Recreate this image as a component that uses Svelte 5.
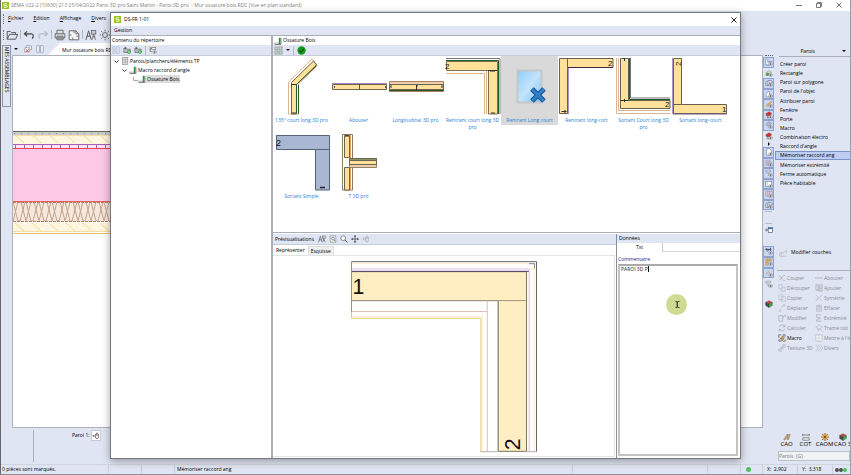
<script lang="ts">
	type Tool = { icon: string; on?: boolean; label: string };

	const menus = ['Fichier', 'Edition', 'Affichage', 'Divers'];

	const wallCommands = [
		'Créer paroi',
		'Rectangle',
		'Paroi sur polygone',
		"Paroi de l'objet",
		'Attribuer paroi',
		'Fenêtre',
		'Porte',
		'Macro',
		'Combinaison électro',
		"Raccord d'angle",
		'Mémoriser raccord ang',
		'Mémoriser extrémité',
		'Ferme automatique',
		'Pièce habitable'
	];

	const viewTools: Tool[] = [
		{ icon: 'wall', on: true, label: 'Paroi' },
		{ icon: 'floor', label: 'Plancher' },
		{ icon: 'poly', on: true, label: 'Polygone' },
		{ icon: 'corner', on: true, label: 'Angle' },
		{ icon: 'beam', on: true, label: 'Poutre' },
		{ icon: 'red', on: true, label: 'Toit' },
		{ icon: 'grey', on: true, label: 'Lucarne' },
		{ icon: 'red', label: 'Couverture' }
	];

	const layerTools: Tool[] = [
		{ icon: 'sheet', on: true, label: 'Feuille' },
		{ icon: 'layers', on: true, label: 'Couches' },
		{ icon: 'eyeSheet', on: true, label: 'Visible' },
		{ icon: 'eyeBox', on: true, label: 'Cadre' },
		{ icon: 'columns', on: true, label: 'Montants' },
		{ icon: 'poly', on: true, label: 'Volume' }
	];

	const displayTools: Tool[] = [
		{ icon: 'dims', on: true, label: 'Cotes' },
		{ icon: 'blocks', on: true, label: 'Blocs' },
		{ icon: 'beamEye', on: true, label: 'Pièces' },
		{ icon: 'eyeSheet', label: 'Textes' }
	];

	const edits = [
		{ icon: 'cut', label: 'Couper' },
		{ icon: 'dash', label: 'Abouter' },
		{ icon: 'split', label: 'Découper' },
		{ icon: 'add', label: 'Ajouter' },
		{ icon: 'copy', label: 'Copier' },
		{ icon: 'mirror', label: 'Symétrie' },
		{ icon: 'move', label: 'Déplacer' },
		{ icon: 'trash', label: 'Effacer' },
		{ icon: 'modify', label: 'Modifier' },
		{ icon: 'end', label: 'Extrémité' },
		{ icon: 'refresh', label: 'Calculer' },
		{ icon: 'roof', label: 'Trame toit' },
		{ icon: 'macro', label: 'Macro' },
		{ icon: 'scale', label: "Mettre à l'é" },
		{ icon: 'texture', label: 'Texture 3D' },
		{ icon: 'more', label: 'Divers' }
	];

	const modules = [
		{ icon: 'cao', label: 'CAO' },
		{ icon: 'cot', label: 'COT' },
		{ icon: 'caom', label: 'CAOM' },
		{ icon: 'cube', label: 'CAO 3' }
	];

	const items = [
		'135° court long 3D pro',
		'Abouter',
		'Longitudinal 3D pro',
		'Rentrant court long 3D pro',
		'Rentrant Long court',
		'Rentrant long-cort',
		'Sortant Court long 3D pro',
		'Sortant long-court',
		'Sortant Simple',
		'T  3D pro'
	];

	let selected = $state(4);
	let command = $state('Mémoriser raccord ang');
	let comment = $state('PAROI 3D P');

	const eye = '<ellipse cx="7" cy="7.5" rx="2.4" ry="1.5" fill="#fff" stroke="#555" stroke-width=".6"/><circle cx="7" cy="7.5" r=".8" fill="#333"/>';
	const folder = '<path d="M1 3h3l1 1h4v4H1z" fill="#b9bcc2" stroke="#555" stroke-width=".7"/><path d="M3 1v3M1.500 2.500h3" stroke="#444" stroke-width=".7"/>';

	// small glyphs on a 10 x 10 grid
	const icons: Record<string, string> = {
		open: '<path d="M1 8.500V2h2.500l1 1H8v1.500M1 8.500L3 4.500h6.700L8 8.500z" fill="none" stroke="#555" stroke-width=".8"/>',
		undo: '<path d="M3.500 2L1.200 4l2.300 2M1.500 4H7c2 0 2 3 .5 4" fill="none" stroke="#444" stroke-width="1"/>',
		redo: '<path d="M6.500 2l2.300 2-2.300 2M8.500 4H3c-2 0-2 3-.5 4" fill="none" stroke="#b5bdcb" stroke-width="1"/>',
		print: '<path d="M2.500 4V1h5v3M1 4h8v3.500H1zM2.500 6h5v3h-5z" fill="#dfe1e5" stroke="#666" stroke-width=".8"/><path d="M3.500 7.500h3" stroke="#666" stroke-width=".6"/>',
		page: '<path d="M1 1.500h5.500L9 4v5H1z" fill="#f5f5f5" stroke="#666" stroke-width=".8"/><path d="M1 5h2M5 1.500v2M9 6H7M4 9V7M6.500 1.500V4H9" stroke="#666" stroke-width=".7" fill="none"/>',
		alpha: '<path d="M.8 9L3 1.500 5.200 9M1.500 6h3" fill="none" stroke="#555" stroke-width=".8"/><rect x="5.500" y="1.200" width="3.500" height="3" fill="#ccc" stroke="#555" stroke-width=".6"/><path d="M7.200 4.200L6 9M7.200 4.200L8.800 9M6.500 6.500h2" stroke="#555" stroke-width=".6"/>',
		sun: '<circle cx="5" cy="5" r="2" fill="none" stroke="#666" stroke-width=".8"/><path d="M5 .5v1.500M5 8v1.500M.5 5H2M8 5h1.500M1.800 1.800l1 1M7.200 7.200l1 1M8.200 1.800l-1 1M2.800 7.200l-1 1" stroke="#666" stroke-width=".7"/>',
		closeDoc: '<rect x="3" y="1" width="6.500" height="5" fill="#e8effa" stroke="#8795ad" stroke-width=".8"/><rect x="1" y="3.500" width="6" height="5" fill="#fff" stroke="#8795ad" stroke-width=".8"/><path d="M2 5l4 4M6 5L2 9" stroke="#d0392b" stroke-width="1.100"/>',
		tile: '<rect x="1" y="1" width="3.300" height="8" fill="#eef3fb" stroke="#8795ad" stroke-width=".8"/><rect x="5.700" y="1" width="3.300" height="8" fill="#eef3fb" stroke="#8795ad" stroke-width=".8"/>',
		list: '<g fill="none" stroke="#b3bac7" stroke-width=".8"><rect x="1" y="1" width="3" height="3"/><rect x="1" y="6" width="3" height="3"/><rect x="6" y="1" width="3" height="8"/></g>',
		folderAdd: folder + '<circle cx="7.500" cy="7.500" r="2.200" fill="#159a28"/><path d="M7.500 6.200v2.600M6.200 7.500h2.600" stroke="#fff" stroke-width=".7"/>',
		treeEye: '<path d="M1.500 1v6h2M1.500 3.500h2" fill="none" stroke="#555" stroke-width=".8"/><rect x="3.500" y="2" width="5" height="2.500" fill="#fff" stroke="#555" stroke-width=".7"/>' + eye,
		cabinet: '<rect x="2" y=".8" width="6.500" height="8.400" fill="#e9e9e9" stroke="#888" stroke-width=".8"/><path d="M2 3.500h6.500M2 6.300h6.500M4.500 2.200h1.500M4.500 5h1.500M4.500 7.800h1.500" stroke="#888" stroke-width=".8"/>',
		angle: '<path d="M.5 7.500h5.500V9H.5z" fill="#f3f3f3" stroke="#999" stroke-width=".7"/><path d="M6 1h2v8H6z" fill="#2e8f3b"/><path d="M8.700 1v8.500H1" fill="none" stroke="#444" stroke-width=".8"/>',
		grid: '<g fill="#bcd6c3" stroke="#888" stroke-width=".6"><rect x="1" y="1" width="3.400" height="3.400"/><rect x="5.600" y="1" width="3.400" height="3.400"/><rect x="1" y="5.600" width="3.400" height="3.400"/><rect x="5.600" y="5.600" width="3.400" height="3.400"/></g>',
		ok: '<circle cx="5" cy="5" r="4.600" fill="#119a1c"/><path d="M2.700 5l1.700 1.900 3-3.600" fill="none" stroke="#064e0b" stroke-width="1.200"/>',
		preview: '<path d="M1.500 1h7v8h-7z" fill="#f4f4f4" stroke="#888" stroke-width=".8"/><circle cx="5" cy="4.500" r="1.800" fill="none" stroke="#555" stroke-width=".7"/><path d="M6.200 6l1.500 1.800" stroke="#555" stroke-width=".8"/>',
		zoom: '<circle cx="4" cy="4" r="3" fill="#f7f9fc" stroke="#555" stroke-width=".8"/><path d="M6.200 6.200L9.300 9.300" stroke="#555" stroke-width="1.200"/>',
		pan: '<path d="M5 1v8M1 5h8" stroke="#444" stroke-width=".9"/><path d="M5 0l1.600 2H3.400zM5 10l1.600-2H3.400zM0 5l2-1.600v3.200zM10 5L8 3.400v3.200z" fill="#333"/>',
		mouse: '<path d="M4.500 2.500h3.500v5q-1.700 2-3.500 0zM6.200 2.500v2.500M1 5h3M2.500 3.500L1 5l1.500 1.500M6.200 .5v2" fill="none" stroke="#444" stroke-width=".8"/>',
		wall: '<path d="M1 1v8h4M3.500 1v3.500H9M6 1v3.500" fill="none" stroke="#778" stroke-width=".8"/><path d="M2 2v5h3M4.500 2.500h4" stroke="#fff" stroke-width="1" fill="none"/>' + eye,
		floor: '<path d="M1 4.500L5 2l3.500 2L5 6.500z" fill="#cbd3c7" stroke="#888" stroke-width=".5"/><circle cx="3" cy="6.800" r="2" fill="#3aaa45"/>' + eye,
		poly: '<path d="M1 8V3.500L5 1.500l4 1v2.500H5V8z" fill="#e6e9ee" stroke="#667" stroke-width=".7"/><path d="M5 1.500V5M3 3v5" stroke="#667" stroke-width=".6"/>' + eye,
		corner: '<path d="M1.500 8.500h7v-2.300H5.500V2H3.500L1.500 6z" fill="#fff" stroke="#778" stroke-width=".7"/>' + eye,
		beam: '<path d="M1 7L8 1.500l1 1L2.500 8z" fill="#f0b35b" stroke="#b98437" stroke-width=".5"/>' + eye,
		beamEye: '<path d="M1.500 7.500L4 2.500l1.500 3" fill="none" stroke="#e2a65b" stroke-width="1.200"/>' + eye,
		red: '<path d="M1 3.500L5 1l3.500 2L6 5.800 2 6z" fill="#cf2f2f" stroke="#7d2b2b" stroke-width=".4"/><path d="M3 6v2.500h2" stroke="#555" fill="none" stroke-width=".7"/>' + eye,
		grey: '<path d="M1 3.500L5 1l3.500 2L6 5.800 2 6z" fill="#b7bac2" stroke="#787b85" stroke-width=".5"/>' + eye,
		sheet: '<path d="M2 1h4l2 2v6H2z" fill="#fff" stroke="#667" stroke-width=".7"/>' + eye,
		layers: '<path d="M1 1.500h5v1.500H1zM1 4h7v1.500H1zM1 6.500h4V8H1z" fill="#ddd" stroke="#a08595" stroke-width=".6"/>' + eye,
		eyeSheet: '<path d="M1 1.500h6v2H1zM1 5h3v3.500" fill="#eee" stroke="#889" stroke-width=".7"/>' + eye,
		eyeBox: '<rect x="1" y="1.500" width="7.500" height="7" fill="#fff" stroke="#667" stroke-width=".7"/><path d="M3 1.500v7" stroke="#889" stroke-width=".5"/>' + eye,
		columns: '<path d="M1 1.500h8v6H1zM3.500 1.500v6M6 1.500v6" fill="#e2d4da" stroke="#99808c" stroke-width=".7"/>' + eye,
		dims: '<path d="M1 3h6M2.500 1.500L1 3l1.500 1.500M7 1v4M3 5.500L5 3" fill="none" stroke="#223" stroke-width=".9"/>' + eye,
		blocks: '<path d="M1 1h3v3H1zM5 1h3v3H5zM1 5h3v4H1z" fill="#f1b560" stroke="#a77c3b" stroke-width=".6"/>' + eye,
		panel: '<path d="M0 5h3M1.500 3.500L3 5 1.500 6.500" fill="none" stroke="#333" stroke-width=".8"/><rect x="4" y="2" width="5.500" height="6" fill="#fff" stroke="#357" stroke-width=".8"/><path d="M4 3h5.500" stroke="#258" stroke-width="1.200"/>',
		cube: '<path d="M5 .8L9.200 3 5 5 .8 3z" fill="#d9433b" stroke="#333" stroke-width=".4"/><path d="M.8 3L5 5v4.500L.8 7z" fill="#444a55" stroke="#333" stroke-width=".4"/><path d="M5 5l4.200-2v4L5 9.500z" fill="#3fae49" stroke="#333" stroke-width=".4"/>',
		cut: '<path d="M1 2l4 3-4 3M9 2H7L3 6M9 8H7L4 5" fill="none" stroke="#a9b0bc" stroke-width=".9"/>',
		dash: '<path d="M0 5h10" stroke="#a3abb8" stroke-width="1"/>',
		split: '<path d="M1 1h4v5H1zM5 4h4v5H4V6" fill="none" stroke="#b2b9c4" stroke-width=".8"/>',
		add: '<path d="M1 1h3v7H1zM5 1h4v4H5zM5 6h4v3H5z" fill="#d6dbe4" stroke="#a4acba" stroke-width=".8"/>',
		copy: '<path d="M1 1h5v6H1zM4 3h5v6H4z" fill="#e6ebf4" stroke="#b2b9c4" stroke-width=".8"/>',
		mirror: '<path d="M1 1l3 3-3 4M9 1L1 9M6 6l3 3" fill="none" stroke="#b2b9c4" stroke-width=".8"/>',
		move: '<path d="M1 9h2V6M4 5l4-4h-2M8 1v2" fill="none" stroke="#b2b9c4" stroke-width=".9"/>',
		trash: '<path d="M2 3h6v6H2zM1.500 2h7M4 1h2M4 4v4M6 4v4" fill="#dde2ea" stroke="#abb2be" stroke-width=".8"/>',
		modify: '<path d="M1 2h5v7H1zM4 6l5-5v3" fill="none" stroke="#a9b0bc" stroke-width=".9"/>',
		end: '<path d="M2 1h6M2 1v3l5 1-5 2v2h6" fill="none" stroke="#a9b0bc" stroke-width=".9"/>',
		refresh: '<path d="M8.500 3.500A3.700 3.700 0 0 0 1.500 4M1.500 6.500a3.700 3.700 0 0 0 7-.5M8.500 1v2.500H6M1.500 9V6.500H4" fill="none" stroke="#a9b0bc" stroke-width=".9"/>',
		roof: '<path d="M5 1l4 3-4 3-4-3zM5 5l4 4M3 6l2 3" fill="none" stroke="#b2b9c4" stroke-width=".8"/>',
		macro: '<path d="M1 5V1h3M1 7v2h3M6 9h3V7M6 1h3v2" fill="none" stroke="#444" stroke-width=".8"/><path d="M2 7l3-4 2-1 1 2-2 4H4L5 5z" fill="#e5a04c" stroke="#555" stroke-width=".6"/>',
		scale: '<path d="M1 1h8v8H1zM3 5h4M5 1v2M5 7v2" fill="#edf1f7" stroke="#b2b9c4" stroke-width=".8"/>',
		texture: '<path d="M1 6h3v3H1zM6 1h3v3H6zM4 6l2-2M3 3L7 7" fill="none" stroke="#a9b0bc" stroke-width=".9"/>',
		more: '<path d="M1 1l3 4-3 4M4 1l3 4-3 4M7 1l2.500 4L7 9" fill="none" stroke="#b2b9c4" stroke-width=".8"/>',
		cao: '<path d="M1 8l4-6h4L7 8H5l1-3H5L2.500 9z" fill="#e2b078" stroke="#665" stroke-width=".6"/><path d="M6 2v3" stroke="#555" stroke-width=".6"/>',
		cot: '<path d="M1 1v3M9 1v3M1 2.500h8M1 6h8v3H1z" fill="#f4f4f4" stroke="#555" stroke-width=".8"/>',
		caom: '<path d="M5 0v10M0 5h10M1.500 1.500l7 7M8.500 1.500l-7 7" stroke="#a86b2b" stroke-width="1.500"/><circle cx="5" cy="5" r="3" fill="#e59a3e"/><circle cx="5" cy="5" r="1.100" fill="#333"/>',
		layerEdit: '<path d="M1 9h8M1 5v4M9 1v5M3 7l5-5M3 7v-2M1 4h3" fill="none" stroke="#b2b5ba" stroke-width=".9"/>'
	};

	// catalogue pictures on a 57 x 59 grid
	const thumbs = [
		`<path d="M15.500 58V26L39 3l5.500 6.500L25.500 28v30z" fill="#fff" stroke="#e0b489"/>
		 <path d="M18.500 58V26.500L40.500 5l3 4L23.500 28.500V58z" fill="#ffe19a" stroke="#6b664d"/>
		 <path d="M43.500 9.500L23.500 28.500V57M25.500 58V29" fill="none" stroke="#225c2a"/><path d="M18.500 28.500h5M19 57h4" stroke="#333"/>`,
		`<path d="M2.500 28.500h54v5h-54z" fill="#ffe19a" stroke="#6b664d"/><path d="M2 27.500h55" stroke="#a683bd"/><path d="M29.500 28v6M4.500 30v2M55.500 30v2" stroke="#555"/>`,
		`<path d="M2.500 25.500h54v10h-54z" fill="#f1cfad" stroke="#a8825f"/><path d="M2.500 28.500h54v5h-54z" fill="#ffe19a" stroke="#6b664d"/><path d="M2 34.500h55" stroke="#31512d"/><path d="M29.500 29v5M4 29v3M55 29v3M30 29v2" stroke="#333"/>`,
		`<path d="M2 2.500h54V58" fill="none" stroke="#777"/><path d="M2 4.500h52.500V58" fill="none" stroke="#225c2a"/><path d="M2.500 5.500h51V58h-9V14.500h-42z" fill="#ffe19a" stroke="#7c7352"/>
		 <path d="M2 17.500h38.500V58M42.500 15v43" fill="none" stroke="#dfb48a"/><path d="M44 14.500h9.500M46 15h5M47 57h4" stroke="#333"/><text x="1" y="12.500" font-size="8">2</text>`,
		`<defs><linearGradient id="sky" x1="0" y1="0" x2="1" y2="1"><stop offset="0" stop-color="#8fcdf7"/><stop offset=".5" stop-color="#c3e4fb"/><stop offset="1" stop-color="#7fc2f1"/></linearGradient></defs>
		 <rect x="16.500" y="14.500" width="24" height="32" fill="url(#sky)" stroke="#c5c8ca" stroke-width="2"/><path d="M31 33l12 12M43 33L31 45" stroke="#174f8f" stroke-width="5"/><path d="M31 33l12 12M43 33L31 45" stroke="#2f7fca" stroke-width="3"/>`,
		`<path d="M1.500 2.500h53.500v9H9.500v46h-8z" fill="#ffe19a" stroke="#67624f"/><path d="M9.500 2.500v9" stroke="#67624f"/><path d="M10.500 58V12" stroke="#b28fd0"/><path d="M10 11.500h45" stroke="#452448"/><text x="50" y="10" font-size="8">2</text><path d="M3.500 55.500h5M7 54v3" stroke="#333"/>`,
		`<path d="M1.500 2v55.500H55M3.500 2v52.500H55" fill="none" stroke="#dbb595"/><path d="M5.500 2.500h8v42H55v8H5.500z" fill="#ffe19a" stroke="#67624f"/><path d="M15.500 2v40H55" fill="none" stroke="#777"/><path d="M14.500 2v41.500H55" fill="none" stroke="#225c2a"/>
		 <path d="M5.500 44.500h8M9.500 2v3M9.500 43v3" stroke="#333"/><text x="50" y="51" font-size="8">2</text>`,
		`<path d="M.5 2v56" stroke="#b28fd0"/><path d="M1.500 2.500h8v46h45v9h-53z" fill="#ffe19a" stroke="#67624f"/><path d="M1.500 48.500h8" stroke="#67624f"/><path d="M1 58h54" stroke="#76577f"/><text x="50" y="56" font-size="8">1</text><text transform="translate(2.500 9) rotate(-90)" x="-1" y="6" font-size="8">2</text>`,
		`<path d="M3.500 3.500h53V58h-14V17.500h-39z" fill="#a9b7d3" stroke="#566279"/><path d="M42.500 17.500h14" stroke="#566279"/><text x="3" y="13.500" font-size="9">2</text><path d="M47 55.500h5" stroke="#222" stroke-width="1.500"/>`,
		`<path d="M12.500 2.500h10v55.500h-10z" fill="#fff" stroke="#8e7a5c"/><path d="M14.500 3.500h5v22h-5zM14.500 35.500h5V58h-5z" fill="#ffe19a" stroke="#6b664d"/><path d="M20.500 3v55" stroke="#dfa267"/>
		 <path d="M19.500 26.500h27v9h-27z" fill="#eeccae" stroke="#9a8562"/><path d="M19.500 28.500h27v4h-27z" fill="#ffe19a" stroke="#6b664d"/><path d="M19 27h28" stroke="#31512d"/><path d="M15 4h4" stroke="#222"/>`
	];
</script>

{#snippet glyph(name: string)}
	<svg class="glyph" viewBox="0 0 10 10" aria-hidden="true">{@html icons[name]}</svg>
{/snippet}

{#snippet logo()}
	<svg class="logo" viewBox="0 0 8 8" aria-hidden="true">
		<rect width="8" height="8" fill="#9bc31c" />
		<path d="M5.800 2H3Q2 2 2 3t1 1h2q1 0 1 1t-1 1H2" fill="none" stroke="#fff" />
	</svg>
{/snippet}

{#snippet toolStack(tools: Tool[])}
	{#each tools as tool}
		<button class="tool" class:on={tool.on} aria-label={tool.label}>{@render glyph(tool.icon)}</button>
	{/each}
{/snippet}

<div class="app">
	<header class="titlebar">
		{@render logo()}
		<span>SEMA V22-2 (10630) 213 25/04/2022 Paroi 3D pro Saint Martin - Paroi 3D pro&nbsp; - Mur ossature bois RDC (Vue en plan standard)</span>
		<div class="window-buttons">
			<button aria-label="Réduire"><svg viewBox="0 0 6 6"><path d="M0 3.500h6" /></svg></button>
			<button aria-label="Restaurer"><svg viewBox="0 0 6 6"><path d="M.5 1.500h4v4h-4zM1.500 1V.5h4v4H5" /></svg></button>
			<button aria-label="Fermer"><svg viewBox="0 0 6 6"><path d="M.5.5l5 5M5.500.5l-5 5" /></svg></button>
		</div>
	</header>

	<nav class="menubar">
		<span class="grip"></span>
		{#each menus as menu}
			<button><u>{menu[0]}</u>{menu.slice(1)}</button>
		{/each}
	</nav>

	<div class="toolbar">
		<span class="grip"></span>
		<button aria-label="Ouvrir">{@render glyph('open')}</button>
		<i></i>
		<button aria-label="Annuler">{@render glyph('undo')}</button>
		<button aria-label="Rétablir">{@render glyph('redo')}</button>
		<i></i>
		<button aria-label="Imprimer">{@render glyph('print')}</button>
		<button aria-label="Mise en page">{@render glyph('page')}</button>
		<i></i>
		<button aria-label="Texte">{@render glyph('alpha')}</button>
		<button aria-label="Options">{@render glyph('sun')}</button>
	</div>

	<div class="workspace">
		<aside class="side-tab">
			<button>MES ASSEMBLAGES</button>
		</aside>

		<main class="document">
			<div class="doc-tabs">
				<span class="caret-down"></span>
				<button aria-label="Fermer le plan">{@render glyph('closeDoc')}</button>
				<button aria-label="Mosaïque">{@render glyph('tile')}</button>
				<div class="doc-tab">Mur ossature bois RDC</div>
			</div>

			<div class="plan">
				<svg width="100%" height="106" aria-hidden="true">
					<defs>
						<pattern id="hatch" width="17" height="8" patternUnits="userSpaceOnUse">
							<path d="M2 0l9 8" stroke="#f7d48e" fill="none" />
						</pattern>
						<pattern id="batten" width="9" height="4" patternUnits="userSpaceOnUse">
							<path d="M2.500 0v4" stroke="#ab62b5" />
						</pattern>
						<pattern id="wool" width="13" height="19" patternUnits="userSpaceOnUse">
							<path d="M0 0l5 19h2L12 0M0 19L5 0h3l5 19" stroke="#c4a389" fill="none" />
						</pattern>
						<pattern id="dots" width="7" height="4" patternUnits="userSpaceOnUse">
							<rect x="1" y="2" width="1" height="1" fill="#888" />
						</pattern>
					</defs>
					<rect width="100%" height="4" fill="#c9cccb" />
					<rect width="100%" height="4" fill="url(#dots)" />
					<rect width="100%" height="1" fill="#5d6865" />
					<rect y="4" width="100%" height="9" fill="#fff6df" />
					<g transform="translate(0 4)"><rect width="100%" height="8" fill="url(#hatch)" /></g>
					<rect y="4" width="100%" height="1" fill="#f8dca5" />
					<rect y="13" width="100%" height="5" fill="#f4e6fa" />
					<g transform="translate(0 13)"><rect width="100%" height="4" fill="url(#batten)" /></g>
					<rect y="13" width="100%" height="1" fill="#ab62b5" />
					<rect y="17" width="100%" height="1" fill="#ee3b52" />
					<rect y="18" width="100%" height="52" fill="#fdc8e5" />
					<rect y="70" width="100%" height="1" fill="#e26363" />
					<rect y="71" width="100%" height="20" fill="#f7e8de" />
					<g transform="translate(0 71)"><rect width="100%" height="19" fill="url(#wool)" /></g>
					<path d="M0 71.500H900M0 90.500H900" stroke="#b48163" stroke-dasharray="3 1" />
					<rect y="92" width="100%" height="9" fill="#fff6df" />
					<g transform="translate(0 92)"><rect width="100%" height="8" fill="url(#hatch)" /></g>
					<rect y="100" width="100%" height="1" fill="#f8dca5" />
					<rect y="102" width="100%" height="1" fill="#e5c16c" />
				</svg>
			</div>

			<div class="prompt">
				<i></i>
				<span>Paroi 1:</span>
				<button aria-label="Saisie souris">{@render glyph('mouse')}</button>
			</div>
		</main>

		<div class="tool-strip">
			<span class="grip flat"></span>
			<div class="stack eight">{@render toolStack(viewTools)}</div>
			<span class="more"></span>
			<div class="stack six">{@render toolStack(layerTools)}</div>
			<div class="gap"></div>
			<button class="tool" aria-label="Volet">{@render glyph('panel')}</button>
			<div class="stack four">{@render toolStack(displayTools)}</div>
			<button class="tool cube" aria-label="Vue 3D">{@render glyph('cube')}</button>
		</div>

		<aside class="panel">
			<button class="panel-head">Parois<span class="caret-down"></span></button>
			<ul class="commands">
				{#each wallCommands as name}
					<li><button class:current={command === name} onclick={() => (command = name)}>{name}</button></li>
				{/each}
			</ul>
			<button class="layers">{@render glyph('layerEdit')}Modifier couches</button>
			<div class="edits">
				{#each edits as edit}
					<button class:enabled={edit.label === 'Macro'}>{@render glyph(edit.icon)}{edit.label}</button>
				{/each}
			</div>
			<div class="modules">
				{#each modules as module}
					<button>{@render glyph(module.icon)}{module.label}</button>
				{/each}
			</div>
			<select aria-label="Groupe" disabled>
				<option>Parois&nbsp; (G)</option>
			</select>
		</aside>
	</div>

	<footer class="status">
		<span class="marked">0 pièces sont marqués.</span>
		<span class="slot"></span>
		<span class="slot"></span>
		<span class="mode">{command}</span>
		<span class="wide"></span>
		<span class="slot"></span>
		<span class="led"><b></b></span>
		<span class="coord">X:&nbsp; 2,902</span>
		<span class="coord">Y:&nbsp; 3,318</span>
		<span class="lights"><b></b><b></b><b></b></span>
	</footer>

	<div class="dialog" role="dialog" aria-label="DS-FR 1-01">
		<div class="dialog-title">
			{@render logo()}
			<span>DS-FR 1-01</span>
			<button aria-label="Fermer la fenêtre"><svg viewBox="0 0 6 6"><path d="M.5.5l5 5M5.500.5l-5 5" /></svg></button>
		</div>
		<div class="dialog-menu"><button>Gestion</button></div>

		<div class="dialog-body">
			<section class="directory">
				<h2>Contenu du répertoire</h2>
				<div class="bar">
					<button aria-label="Liste">{@render glyph('list')}</button>
					<button aria-label="Nouveau dossier">{@render glyph('folderAdd')}</button>
					<button aria-label="Nouveau sous-dossier">{@render glyph('folderAdd')}</button>
					<i></i>
					<button aria-label="Arborescence">{@render glyph('treeEye')}</button>
				</div>
				<ul class="tree">
					<li>
						<svg class="chevron" viewBox="0 0 5 5"><path d="M.5 1.500l2 2 2-2" /></svg>{@render glyph('cabinet')}<span>Parois/planchers/éléments TP</span>
					</li>
					<li class="level-2">
						<svg class="chevron" viewBox="0 0 5 5"><path d="M.5 1.500l2 2 2-2" /></svg>{@render glyph('angle')}<span>Macro raccord d'angle</span>
					</li>
					<li class="level-3">
						<svg class="chevron branch" viewBox="0 0 5 5"><path d="M.5 0v3.500H5" /></svg>{@render glyph('angle')}<span class="picked">Ossature Bois</span>
					</li>
				</ul>
			</section>

			<div class="content">
				<h2 class="location">{@render glyph('angle')}Ossature Bois</h2>
				<div class="bar">
					<button aria-label="Affichage">{@render glyph('grid')}</button>
					<span class="caret-down"></span>
					<i></i>
					<button aria-label="Valider">{@render glyph('ok')}</button>
				</div>
				<div class="gallery">
					{#each items as item, n}
						<button class:selected={selected === n} onclick={() => (selected = n)}>
							<svg viewBox="0 0 57 59" aria-hidden="true">{@html thumbs[n]}</svg>
							<span>{item}</span>
						</button>
					{/each}
				</div>

				<div class="lower">
					<section class="preview">
						<div class="bar">
							<span>Prévisualisations</span>
							<button aria-label="Texte">{@render glyph('alpha')}</button>
							<button aria-label="Aperçu">{@render glyph('preview')}</button>
							<button aria-label="Zoom">{@render glyph('zoom')}</button>
							<button aria-label="Déplacer">{@render glyph('pan')}</button>
							<button class="off" aria-label="Souris">{@render glyph('mouse')}</button>
						</div>
						<div class="tabs">
							<button class="active">Représenter</button>
							<button>Esquisse</button>
						</div>
						<div class="sheet">
							<svg viewBox="240 90 570 580" role="img" aria-label="Raccord d'angle">
								<g fill="none" stroke-width="3">
									<path d="M247 125H773V665H688V212H247z" fill="#ffeec2" stroke="#77745f" />
									<path d="M247 212H773M688 212V665" stroke="#9c9680" />
									<path d="M247 95H803V667" stroke="#666" />
									<path d="M247 101H796V667" stroke="#ffeccb" />
									<path d="M247 117H781V665" stroke="#dcc0e8" />
									<path d="M247 124H780" stroke="#553b68" />
									<path d="M781 101H797V116" stroke="#888" />
									<path d="M781 117H797" stroke="#ffe2a9" />
									<path d="M247 212V245H655M655 212V667" stroke="#dcbfae" />
									<path d="M247 260H640M641 246V667" stroke="#fff0d2" />
									<path d="M247 245V265H636V667" stroke="#e5c777" />
									<path d="M634 666H690M770 666H804" stroke="#b8b3ab" />
									<path d="M247 95V245" stroke="#a28b78" />
								</g>
								<text x="250" y="191" font-size="64">1</text>
								<text transform="translate(753 662) rotate(-90)" font-size="64">2</text>
							</svg>
						</div>
					</section>

					<section class="data">
						<h3>Données</h3>
						<div class="data-tabs"><button>Txt</button></div>
						<label for="comment">Commentaire</label>
						<div class="field">
							<textarea id="comment" spellcheck="false" bind:value={comment}></textarea>
							<span class="text-caret"></span>
							<svg class="pointer" viewBox="0 0 21 21" aria-hidden="true">
								<circle cx="10.500" cy="10.500" r="10.500" fill="#cfdb93" />
								<path d="M9.500 7.500h1.500v6H9.500M13.500 7.500H12M13.500 13.500H12M11.500 7.500v6" fill="none" stroke="#454b2c" />
							</svg>
						</div>
					</section>
				</div>
			</div>
		</div>
	</div>
</div>

<style>
	:global(body) {
		margin: 0;
	}

	.app {
		--face: #dfe5f2;
		--line: #a9aeb8;
		position: relative;
		display: flex;
		flex-direction: column;
		min-height: 100vh;
		box-sizing: border-box;
		overflow: hidden;
		background: var(--face);
		border-left: 1px solid #65676c;
		border-right: 1px solid #9b9ea5;
		border-bottom: 1px solid #8a8d93;
		color: #000;
		font: 5px/7px "Open Sans", "Noto Sans", sans-serif;
	}

	.app * {
		box-sizing: border-box;
	}

	button {
		display: flex;
		align-items: center;
		padding: 0;
		border: 0;
		background: none;
		color: inherit;
		font: inherit;
		white-space: nowrap;
	}

	h2,
	h3,
	ul {
		margin: 0;
		padding: 0;
		font: inherit;
		list-style: none;
	}

	svg {
		display: block;
		flex: none;
	}

	.glyph {
		width: 8px;
		height: 8px;
	}

	.logo {
		width: 7px;
		height: 7px;
	}

	.caret-down {
		border: 2px solid transparent;
		border-top-color: #111;
		border-bottom: 0;
	}

	.grip {
		width: 1px;
		height: 10px;
		border-left: 1px dotted #6f7682;
	}

	.grip.flat {
		width: 8px;
		height: 1px;
		margin: 0 2px 1px;
		border-left: 0;
		border-top: 1px dotted #4c5a80;
	}

	.titlebar {
		display: flex;
		align-items: center;
		gap: 2px;
		height: 11px;
		padding: 0 8px 1px 1px;
		background: #fff;
		color: #808080;
	}

	.window-buttons {
		display: flex;
		gap: 14px;
		margin-left: auto;
	}

	.window-buttons svg,
	.dialog-title button svg {
		width: 6px;
		height: 6px;
		fill: none;
		stroke: #777;
	}

	.menubar {
		display: flex;
		align-items: center;
		gap: 10px;
		height: 15px;
		padding-left: 2px;
	}

	.menubar .grip {
		margin-right: -6px;
	}

	.toolbar {
		display: flex;
		align-items: center;
		gap: 2px;
		height: 17px;
		padding-left: 2px;
	}

	.toolbar .glyph {
		width: 12px;
		height: 12px;
	}

	.toolbar i,
	.bar i {
		width: 1px;
		height: 9px;
		background: #b4bac6;
	}

	.workspace {
		display: flex;
		flex: 1;
	}

	.side-tab {
		width: 11px;
		padding: 2px 0 0 1px;
	}

	.side-tab button {
		width: 9px;
		height: 62px;
		padding-top: 1px;
		border: 1px solid #8f96a5;
		writing-mode: vertical-rl;
	}

	.document {
		display: flex;
		flex: 1;
		flex-direction: column;
		min-width: 0;
	}

	.doc-tabs {
		display: flex;
		align-items: center;
		height: 12px;
		gap: 4px;
		padding-left: 2px;
	}

	.doc-tabs button:first-of-type {
		margin-left: 2px;
	}

	.doc-tab {
		height: 12px;
		padding: 4px 40px 0 14px;
		background: #fff;
		clip-path: polygon(12px 0, 100% 0, 100% 100%, 0 100%);
	}

	.plan {
		flex: 1;
		padding-top: 75px;
		background: #fff;
		border: 1px solid #aeb2ba;
	}

	.plan svg {
		max-width: 640px;
	}

	.prompt {
		display: flex;
		height: 36px;
		padding: 2px 0 2px 21px;
	}

	.prompt i {
		width: 1px;
		margin-right: 38px;
		background: #aab0bc;
	}

	.prompt span {
		padding-top: 2px;
		margin-right: 1px;
	}

	.prompt button {
		width: 10px;
		height: 11px;
		background: #fff;
		border: 1px solid #c5cad4;
	}

	.tool-strip {
		display: flex;
		flex-direction: column;
		width: 12px;
		padding: 12px 1px 0 0;
	}

	.stack {
		display: grid;
		grid-auto-rows: 1fr;
	}

	.eight {
		height: 84px;
	}

	.six {
		height: 63px;
	}

	.four {
		height: 43px;
		margin-top: 11px;
	}

	.tool {
		justify-content: center;
		border: 1px solid transparent;
	}

	.tool.on {
		background: #c9d6f2;
		border-color: #8ea3d0;
	}

	.tool.cube {
		margin-top: 10px;
	}

	.more {
		align-self: center;
		margin: 1px 0;
		border: 2px solid transparent;
		border-left-color: #111;
		border-right: 0;
	}

	.gap {
		height: 13px;
		margin: 1px 2px;
		border-top: 1px solid #b4bac6;
		border-bottom: 1px solid #b4bac6;
	}

	.panel {
		display: flex;
		flex-direction: column;
		width: 75px;
		padding-top: 3px;
		overflow: hidden;
	}

	.panel-head {
		justify-content: flex-end;
		gap: 27px;
		height: 11px;
		margin-left: 4px;
		padding-right: 4px;
		border-bottom: 1px solid var(--line);
	}

	.commands {
		display: grid;
		grid-auto-rows: 1fr;
		height: 128px;
		margin-top: 3px;
	}

	.commands button {
		width: 100%;
		height: 9px;
		padding-left: 4px;
		border: 1px solid transparent;
		border-right: 0;
	}

	.commands button.current {
		background: #bdcdf5;
		border-color: #7e93c4;
	}

	.layers {
		gap: 4px;
		height: 36px;
		margin: 47px 0 2px 2px;
		padding-left: 2px;
		border-bottom: 1px solid var(--line);
	}

	.edits {
		display: grid;
		grid-template-columns: 37px 1fr;
		grid-auto-rows: 10px;
		padding-left: 3px;
		color: #868c98;
	}

	.edits button {
		gap: 1px;
	}

	.edits button.enabled {
		color: #000;
	}

	.modules {
		display: grid;
		grid-template-columns: 19px 19px 19px 1fr;
		margin: auto 0 3px 2px;
	}

	.modules button {
		flex-direction: column;
		font-size: 6px;
	}

	.panel select {
		height: 10px;
		margin: 0 0 3px 3px;
		padding: 0;
		appearance: none;
		background: #f1f2f4;
		border: 1px solid #bcc1ca;
		color: #777c86;
		font: inherit;
		opacity: 1;
	}

	.status {
		display: flex;
		height: 10px;
		border-top: 1px solid #d0d5df;
		line-height: 9px;
	}

	.status span {
		display: flex;
		align-items: center;
		border-right: 1px solid #c8cedb;
	}

	.status .marked {
		width: 108px;
		padding-left: 1px;
	}

	.status .slot {
		width: 33px;
	}

	.status .mode {
		flex: 1;
		padding-left: 2px;
	}

	.status .wide {
		width: 135px;
	}

	.status .led {
		width: 22px;
		padding-left: 5px;
	}

	.status b {
		width: 5px;
		height: 5px;
		border-radius: 50%;
		background: #4fc05a;
	}

	.status .coord {
		width: 35px;
		padding-left: 4px;
	}

	.status .lights {
		width: 17px;
		padding-left: 2px;
		border-right: 0;
	}

	.status .lights b {
		width: 4px;
		height: 4px;
		background: #4d5552;
	}

	.status .lights b:last-child {
		background: #4fc05a;
	}

	.dialog {
		position: absolute;
		inset: 12px 109px 15px;
		display: flex;
		flex-direction: column;
		background: #fff;
		border: 1px solid #74777d;
		box-shadow: 0 2px 8px rgba(0, 0, 0, 0.35);
	}

	.dialog-title {
		display: flex;
		align-items: center;
		gap: 3px;
		height: 13px;
		padding: 0 3px;
	}

	.dialog-title button {
		margin-left: auto;
	}

	.dialog-title button svg {
		stroke: #222;
	}

	.dialog-menu {
		height: 9px;
		padding: 1px 3px;
		background: var(--face);
	}

	.dialog-body {
		display: flex;
		flex: 1;
		min-height: 0;
		border-top: 1px solid var(--line);
	}

	.directory {
		width: 161px;
		border-right: 1px solid var(--line);
	}

	h2 {
		height: 9px;
		padding: 1px;
	}

	.bar {
		display: flex;
		align-items: center;
		gap: 3px;
		height: 11px;
		padding: 0 1px;
		background: var(--face);
		border-bottom: 1px solid #c6ccd8;
	}

	.tree li {
		display: flex;
		align-items: center;
		height: 8px;
		padding-left: 3px;
	}

	.tree {
		display: grid;
		gap: 1px;
		padding-top: 1px;
	}

	.tree li.level-2 {
		padding-left: 11px;
	}

	.tree li.level-3 {
		padding-left: 22px;
	}

	.tree span {
		padding: 0 1px;
		line-height: 8px;
	}

	.tree .picked {
		background: #dcdcdc;
	}

	.chevron {
		width: 5px;
		height: 5px;
		margin-right: 2px;
		fill: none;
		stroke: #333;
	}

	.chevron.branch {
		margin-right: 0;
		stroke: #aaa;
	}

	.content {
		display: flex;
		flex: 1;
		flex-direction: column;
		min-width: 0;
		border-left: 1px solid var(--line);
	}

	.location {
		display: flex;
		align-items: center;
		gap: 1px;
	}

	.content > .bar .glyph {
		width: 9px;
		height: 9px;
	}

	.gallery {
		display: grid;
		grid-template-columns: repeat(auto-fill, 57px);
		grid-auto-rows: max-content;
		align-items: start;
		flex: 1;
		border-bottom: 1px solid var(--line);
	}

	.gallery button {
		flex-direction: column;
		width: 57px;
		gap: 2px;
		padding-bottom: 1px;
		color: #1f83d8;
		line-height: 7px;
	}

	.gallery button.selected {
		background: #d9d9d9;
	}

	.gallery svg {
		width: 57px;
		height: 59px;
		fill: none;
	}

	.gallery svg :global(text),
	.sheet text {
		fill: #111;
		font-family: "Liberation Sans", Arial, sans-serif;
	}

	.gallery span {
		white-space: normal;
		text-align: center;
	}

	.lower {
		display: flex;
		height: 225px;
		padding-top: 1px;
	}

	.preview {
		display: flex;
		flex: 1;
		flex-direction: column;
	}

	.preview .bar span {
		padding: 0 1px;
	}

	.preview .off {
		opacity: 0.4;
	}

	.tabs {
		display: flex;
		height: 10px;
	}

	.tabs button {
		margin-top: 1px;
		padding: 0 2px;
		background: #f0f0f0;
		border: 1px solid #dedede;
		border-bottom: 0;
	}

	.tabs button.active {
		margin-top: 0;
		background: #fff;
		border-color: transparent;
	}

	.sheet {
		display: flex;
		justify-content: center;
		flex: 1;
		margin: 0 1px 1px 0;
		padding-top: 4px;
		border: 1px solid #e3e4e6;
		border-left: 0;
	}

	.sheet svg {
		width: 190px;
		height: 193px;
	}

	.data {
		display: flex;
		flex-direction: column;
		width: 124px;
		border-left: 1px solid #8b9098;
	}

	h3 {
		height: 9px;
		padding: 1px 2px;
		background: var(--face);
	}

	.data-tabs {
		height: 9px;
		border-bottom: 1px solid #d5d7da;
	}

	.data-tabs button {
		justify-content: center;
		width: 46px;
		height: 9px;
		background: #fff;
		border-right: 1px solid #c5c7ca;
	}

	.data label {
		padding: 4px 1px 1px;
		color: #1c1c8c;
	}

	.field {
		position: relative;
		flex: 1;
		margin: 0 2px 2px 1px;
	}

	textarea {
		display: block;
		width: 100%;
		height: 100%;
		padding: 0 1px;
		border: 2px solid #c3c3c3;
		border-top-color: #aaa;
		outline: 0;
		color: #222;
		font: inherit;
		resize: none;
	}

	.text-caret {
		position: absolute;
		top: 2px;
		left: 30px;
		width: 1px;
		height: 6px;
		background: #111;
	}

	.pointer {
		position: absolute;
		top: 30px;
		left: 48px;
		width: 21px;
		height: 21px;
	}
</style>
